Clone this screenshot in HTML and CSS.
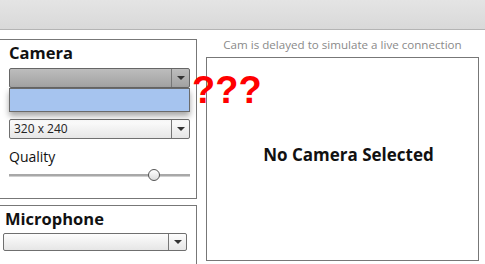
FILE: index.html
```html
<!DOCTYPE html>
<html>
<head>
	<meta charset="utf-8">
	<title>Cam Test</title>
	<link rel="stylesheet" href="styles.css">
</head>
<body>
	<div class="topbar"></div>
	<div class="main">
		<div class="left">
			<section class="panel camera">
				<h2>Camera</h2>
				<div class="dropwrap">
					<div class="select dark"><span class="val"></span><span class="arrow"></span></div>
					<div class="popup"></div>
				</div>
				<div class="select res"><span class="val">320 x 240</span><span class="arrow"></span></div>
				<div class="label">Quality</div>
				<div class="slider"><div class="track"></div><div class="thumb"></div></div>
			</section>
			<section class="panel mic">
				<h2>Microphone</h2>
				<div class="select"><span class="val"></span><span class="arrow"></span></div>
			</section>
		</div>
		<div class="right">
			<p class="note">Cam is delayed to simulate a live connection</p>
			<div class="video">No Camera Selected</div>
		</div>
	</div>
	<div class="huh">???</div>
</body>
</html>
```
FILE: styles.css
```css
body {
	margin: 0; font-family: 'Open Sans', sans-serif; background: #fff; width: 485px; height: 264px; overflow: hidden; position: relative;
}
.topbar {
	height: 29px; border-bottom: 1px solid #b4b4b4; background: linear-gradient(#e4e4e4, #d9d9d9);
}
.main { display: flex; }
.left { width: 198px; margin-left: -1px; }
.panel { border: 1px solid #777; }
.camera { margin-top: 9px; height: 158px; padding: 0 6px 0 9px; }
.mic { margin-top: 6px; height: 70px; padding: 0 9px 0 3px; }
h2 { font-size: 16.5px; font-weight: bold; margin: 0; line-height: 22px; padding-top: 2px; color: #111; }
.mic h2 { padding-left: 2px; }
.dropwrap { position: relative; margin-top: 4px; }
.select {
	display: flex; height: 18px; border: 1px solid #6f6f6f; border-radius: 2px; background: linear-gradient(#fdfdfd, #e6e6e6); font-size: 12px; color: #222;
}
.select .val { flex: 1; line-height: 18px; padding-left: 4px; }
.select .arrow { width: 17px; border-left: 1px solid #777; position: relative; }
.select .arrow::after {
	content: ''; position: absolute; left: 5px; top: 7px; border-left: 4px solid transparent; border-right: 4px solid transparent; border-top: 4px solid #333;
}
.select.dark { background: linear-gradient(#bdbdbd, #a2a2a2); border-color: #666; }
.popup {
	position: absolute; left: 0; right: 0; top: 20px; height: 22px; background: #a6c4ef; border: 1px solid #6b6b6b; box-shadow: 0 4px 6px rgba(0,0,0,0.35);
}
.res { margin-top: 31px; }
.mic .select { margin-top: 3px; height: 16px; }
.mic .select .val { line-height: 16px; }
.mic .select .arrow::after { top: 6px; }
.label { font-size: 14px; color: #111; margin-top: 9px; line-height: 18px; }
.slider { position: relative; height: 14px; margin-top: 3px; }
.track { position: absolute; left: 0; right: 0; top: 5px; height: 2px; background: #a8a8a8; border-bottom: 1px solid #d0d0d0; }
.thumb {
	position: absolute; left: 139px; top: 0; width: 10px; height: 10px; border-radius: 50%; border: 1px solid #555; background: linear-gradient(#fff, #ddd);
}
.right { flex: 1; padding-left: 9px; padding-right: 6px; }
.note { margin: 8px 0 0; font-size: 11.6px; color: #8a8a8a; text-align: center; line-height: 14px; }
.video {
	margin-top: 5px; height: 204px; border: 1px solid #777; display: flex; align-items: center; justify-content: center; font-weight: bold; font-size: 17px; color: #111; padding: 0 0 10px 12px; box-sizing: border-box;
}
.huh {
	position: absolute; left: 192px; top: 68px; font-family: 'Liberation Sans', sans-serif; font-weight: bold; font-size: 38px; color: #f00; line-height: 44px; letter-spacing: 0;
}
```
